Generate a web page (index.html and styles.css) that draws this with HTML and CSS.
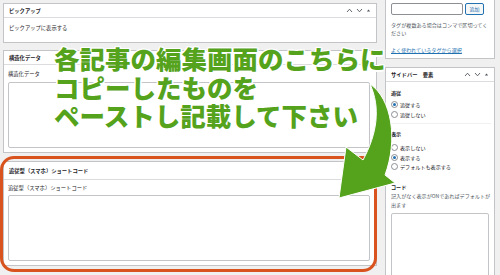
FILE: index.html
```html
<!DOCTYPE html>
<html lang="ja">
<head>
    <meta charset="UTF-8">
    <meta name="viewport" content="width=device-width, initial-scale=1.0">
    <title>投稿の編集</title>
    <link rel="stylesheet" href="styles.css">
</head>
<body>
    <div class="page">
        <div class="main">
            <div class="box box-pickup">
                <div class="box-head">
                    <span>ピックアップ</span>
                    <span class="tools">
                        <svg width="7" height="5" viewBox="0 0 7 5"><polyline points="1,4 3.5,1.2 6,4" /></svg>
                        <svg width="7" height="5" viewBox="0 0 7 5"><polyline points="1,1 3.5,3.8 6,1" /></svg>
                        <svg width="5" height="5" viewBox="0 0 5 5"><polygon points="0.8,3.6 2.5,1.6 4.2,3.6" class="fill" /></svg>
                    </span>
                </div>
                <div class="box-body">
                    <p class="text">ピックアップに表示する</p>
                </div>
            </div>

            <div class="box box-data">
                <div class="box-head">
                    <span>構造化データ</span>
                </div>
                <div class="box-body">
                    <p class="text label">構造化データ</p>
                    <div class="field"></div>
                </div>
            </div>

            <div class="box box-code">
                <div class="box-head">
                    <span>追従型（スマホ）ショートコード</span>
                </div>
                <div class="box-body">
                    <p class="text label">追従型（スマホ）ショートコード</p>
                    <div class="field"></div>
                </div>
            </div>
        </div>

        <div class="side">
            <div class="box box-tags">
                <div class="tag-row">
                    <div class="tag-input"></div>
                    <div class="tag-btn">追加</div>
                </div>
                <p class="text help">タグが複数ある場合はコンマで区切ってください</p>
                <a class="text link" href="#">よく使われているタグから選択</a>
            </div>

            <div class="box box-sidebar">
                <div class="box-head">
                    <span>サイドバー　要素</span>
                    <span class="tools">
                        <svg width="7" height="5" viewBox="0 0 7 5"><polyline points="1,4 3.5,1.2 6,4" /></svg>
                        <svg width="7" height="5" viewBox="0 0 7 5"><polyline points="1,1 3.5,3.8 6,1" /></svg>
                        <svg width="5" height="5" viewBox="0 0 5 5"><polygon points="0.8,3.6 2.5,1.6 4.2,3.6" class="fill" /></svg>
                    </span>
                </div>
                <div class="box-body">
                    <div class="group">
                        <p class="text group-title">追従</p>
                        <label class="radio"><span class="dot on"></span>追従する</label>
                        <label class="radio"><span class="dot"></span>追従しない</label>
                    </div>
                    <div class="group group-show">
                        <p class="text group-title">表示</p>
                        <label class="radio"><span class="dot"></span>表示しない</label>
                        <label class="radio"><span class="dot on"></span>表示する</label>
                        <label class="radio"><span class="dot"></span>デフォルトも表示する</label>
                        <p class="text group-title code-title">コード</p>
                        <p class="text desc">記入がなく表示がONであればデフォルトが出ます</p>
                        <div class="field side-field"></div>
                    </div>
                </div>
            </div>
        </div>
    </div>

    <!-- annotation layer -->
    <div class="highlight"></div>
    <p class="note">各記事の編集画面のこちらに<br>コピーしたものを<br>ペーストし記載して下さい</p>
    <svg class="arrow" width="500" height="275" viewBox="0 0 500 275">
        <path d="M370 84 C392 99 398 140 385 175 L395 183 L339 198 L346 147 L363 160 C377 134 381 108 370 84 Z" />
    </svg>
</body>
</html>
```

FILE: styles.css
```css
body {
    margin: 0;
    background-color: #f0f0f1;
    color: #1d2327;
    font-family: "Noto Sans CJK JP", "Noto Sans", sans-serif;
    overflow: hidden;
}
.page {
    display: flex;
    gap: 8px;
    padding: 0 5px 0 3px;
    height: 275px;
    overflow: hidden;
}
.main {
    width: 374px;
}
.side {
    flex: 1;
}
.text {
    margin: 0;
    font-size: 5.3px;
    line-height: 7px;
}
.side .text,
.side .radio {
    font-size: 5.1px;
}
.box {
    background: #fff;
    border: 1px solid #c3c4c7;
}
.box-head {
    height: 13px;
    display: flex;
    align-items: center;
    justify-content: space-between;
    padding: 0 5px;
    border-bottom: 1px solid #dcdcde;
    font-size: 5.3px;
    font-weight: 700;
}
.tools {
    display: flex;
    align-items: center;
    gap: 3px;
}
.tools svg polyline {
    fill: none;
    stroke: #50575e;
    stroke-width: 0.9;
}
.tools svg .fill {
    fill: #50575e;
}
.box-body {
    padding: 0 5px;
}
.field {
    border: 1px solid #c3c4c7;
    border-radius: 2px;
    background: #fff;
}

/* main column */
.box-pickup {
    margin-top: 3px;
}
.box-pickup .box-body {
    height: 24px;
    padding-top: 7px;
    box-sizing: border-box;
}
.box-data {
    margin-top: 7px;
}
.box-data .box-body {
    padding: 6px 6px 4px 4px;
}
.label {
    margin-bottom: 4px;
}
.box-data .field {
    height: 64px;
}
.box-code {
    margin-top: 8px;
}
.box-code .box-head {
    height: 17px;
}
.box-code .box-body {
    padding: 5px 6px 4px 4px;
}
.box-code .label {
    margin-bottom: 3px;
}
.box-code .field {
    height: 64px;
}

/* side column */
.box-tags {
    margin-top: -6px;
    padding: 8px 2px 5px 5px;
}
.tag-row {
    display: flex;
    gap: 2px;
}
.tag-input {
    width: 70px;
    height: 10px;
    border: 1px solid #8c8f94;
    border-radius: 2px;
}
.tag-btn {
    width: 17px;
    height: 10px;
    border: 1px solid #2271b1;
    border-radius: 2px;
    background: #f6f7f7;
    color: #2271b1;
    font-size: 5px;
    line-height: 10px;
    text-align: center;
}
.help {
    margin-top: 6px;
    line-height: 7.5px;
    color: #50575e;
}
.link {
    display: block;
    margin-top: 10px;
    color: #2271b1;
    text-decoration: underline;
}
.box-sidebar {
    margin-top: 8px;
    height: 215px;
}
.box-sidebar .box-body {
    padding-right: 3px;
}
.group {
    padding: 7px 0 4px;
}
.group-title {
    font-weight: 700;
    margin-bottom: 4px;
}
.group-show {
    border-top: 1px solid #f0f0f1;
    padding-top: 6px;
}
.group-show .group-title {
    margin-bottom: 6px;
}
.radio {
    display: flex;
    align-items: center;
    gap: 2px;
    height: 9.5px;
    font-size: 5.3px;
}
.dot {
    width: 5px;
    height: 5px;
    border: 1px solid #8c8f94;
    border-radius: 50%;
    display: flex;
    align-items: center;
    justify-content: center;
}
.dot.on::after {
    content: "";
    width: 3px;
    height: 3px;
    border-radius: 50%;
    background: #2271b1;
}
.group-show .code-title {
    margin-top: 11px;
    margin-bottom: 1px;
}
.desc {
    line-height: 9px;
    color: #50575e;
}
.side-field {
    margin-top: 4px;
    margin-right: 2px;
    height: 80px;
}

/* annotation layer */
.highlight {
    position: absolute;
    left: 0;
    top: 156px;
    width: 371px;
    height: 110px;
    border: 3.5px solid #d9531e;
    border-radius: 14px;
}
.note {
    position: absolute;
    left: 54px;
    top: 44px;
    margin: 0;
    font-size: 25.5px;
    line-height: 28.5px;
    font-weight: 900;
    color: #55a31c;
    text-shadow: 1.5px 0 0 #fff, -1.5px 0 0 #fff, 0 1.5px 0 #fff, 0 -1.5px 0 #fff,
        1px 1px 0 #fff, -1px -1px 0 #fff, 1px -1px 0 #fff, -1px 1px 0 #fff;
}
.arrow {
    position: absolute;
    left: 0;
    top: 0;
}
.arrow path {
    fill: #55a31c;
    stroke: #fff;
    stroke-width: 1;
}
```
